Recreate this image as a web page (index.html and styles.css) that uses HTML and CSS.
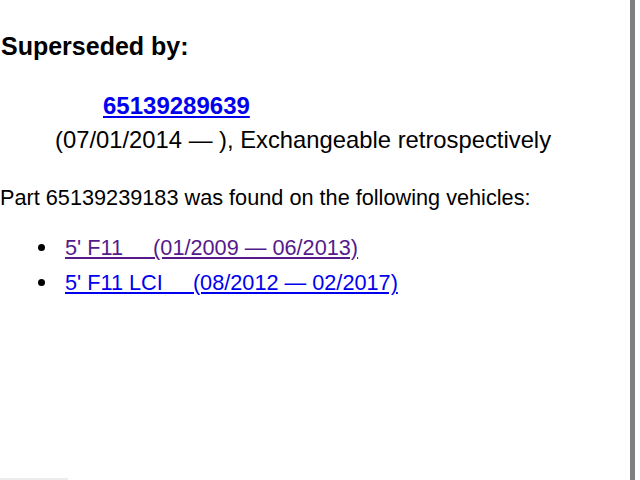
FILE: index.html
```html
<!DOCTYPE html>
<html lang="en">
<head>
<meta charset="utf-8">
<title>Superseded by</title>
<link rel="stylesheet" href="styles.css">
</head>
<body>
<div class="page">
  <main class="content">
    <h2 class="title">Superseded by:</h2>
    <div class="replacement">
      <a class="part-link" href="#65139289639">65139289639</a>
      <p class="validity">(07/01/2014 — ), Exchangeable retrospectively</p>
    </div>
    <p class="found">Part 65139239183 was found on the following vehicles:</p>
    <ul class="vehicles">
      <li class="vehicle-item"><a class="vehicle visited" href="#f11">5' F11&nbsp;&nbsp;&nbsp;&nbsp;&nbsp;(01/2009 — 06/2013)</a></li>
      <li class="vehicle-item"><a class="vehicle" href="#f11lci">5' F11 LCI&nbsp;&nbsp;&nbsp;&nbsp;&nbsp;(08/2012 — 02/2017)</a></li>
    </ul>
  </main>
  <div class="rule"></div>
  <div class="scroll-hint"></div>
</div>
</body>
</html>
```

FILE: styles.css
```css
html, body {
  margin: 0;
  padding: 0;
  background: #ffffff;
}

.page {
  position: relative;
  display: flex;
  width: 640px;
  height: 480px;
  overflow: hidden;
  font-family: "Liberation Sans", Arial, Helvetica, sans-serif;
  color: #000000;
}

.content {
  flex: 1;
  display: flex;
  flex-direction: column;
  align-items: flex-start;
}

.title {
  margin: 31px 0 0 1px;
  font-size: 25px;
  line-height: 30px;
  font-weight: bold;
}

.replacement {
  display: flex;
  flex-direction: column;
  align-items: flex-start;
  margin-top: 31px;
}

.part-link {
  margin-left: 103px;
  font-size: 24px;
  line-height: 28px;
  font-weight: bold;
  color: #0000ee;
  text-decoration: underline;
}

.validity {
  margin: 6px 0 0 55px;
  font-size: 23.8px;
  line-height: 28px;
}

.found {
  margin: 30px 0 0 0;
  font-size: 21.7px;
  line-height: 28px;
}

.vehicles {
  margin: 18px 0 0 0;
  padding-left: 38px;
  list-style: none;
  font-size: 21.7px;
  line-height: 35px;
}

.vehicle-item {
  display: flex;
  align-items: center;
}

.vehicle-item::before {
  content: "";
  width: 7px;
  height: 7px;
  margin-right: 20px;
  border-radius: 50%;
  background: #000000;
}

.vehicle {
  color: #0000ee;
  text-decoration: underline;
}

.vehicle.visited {
  color: #551a8b;
}

.rule {
  width: 5px;
  margin-right: 5px;
  background: #808080;
}

.scroll-hint {
  position: absolute;
  left: 0;
  bottom: 0;
  width: 68px;
  height: 2px;
  background: #ececec;
}
```
